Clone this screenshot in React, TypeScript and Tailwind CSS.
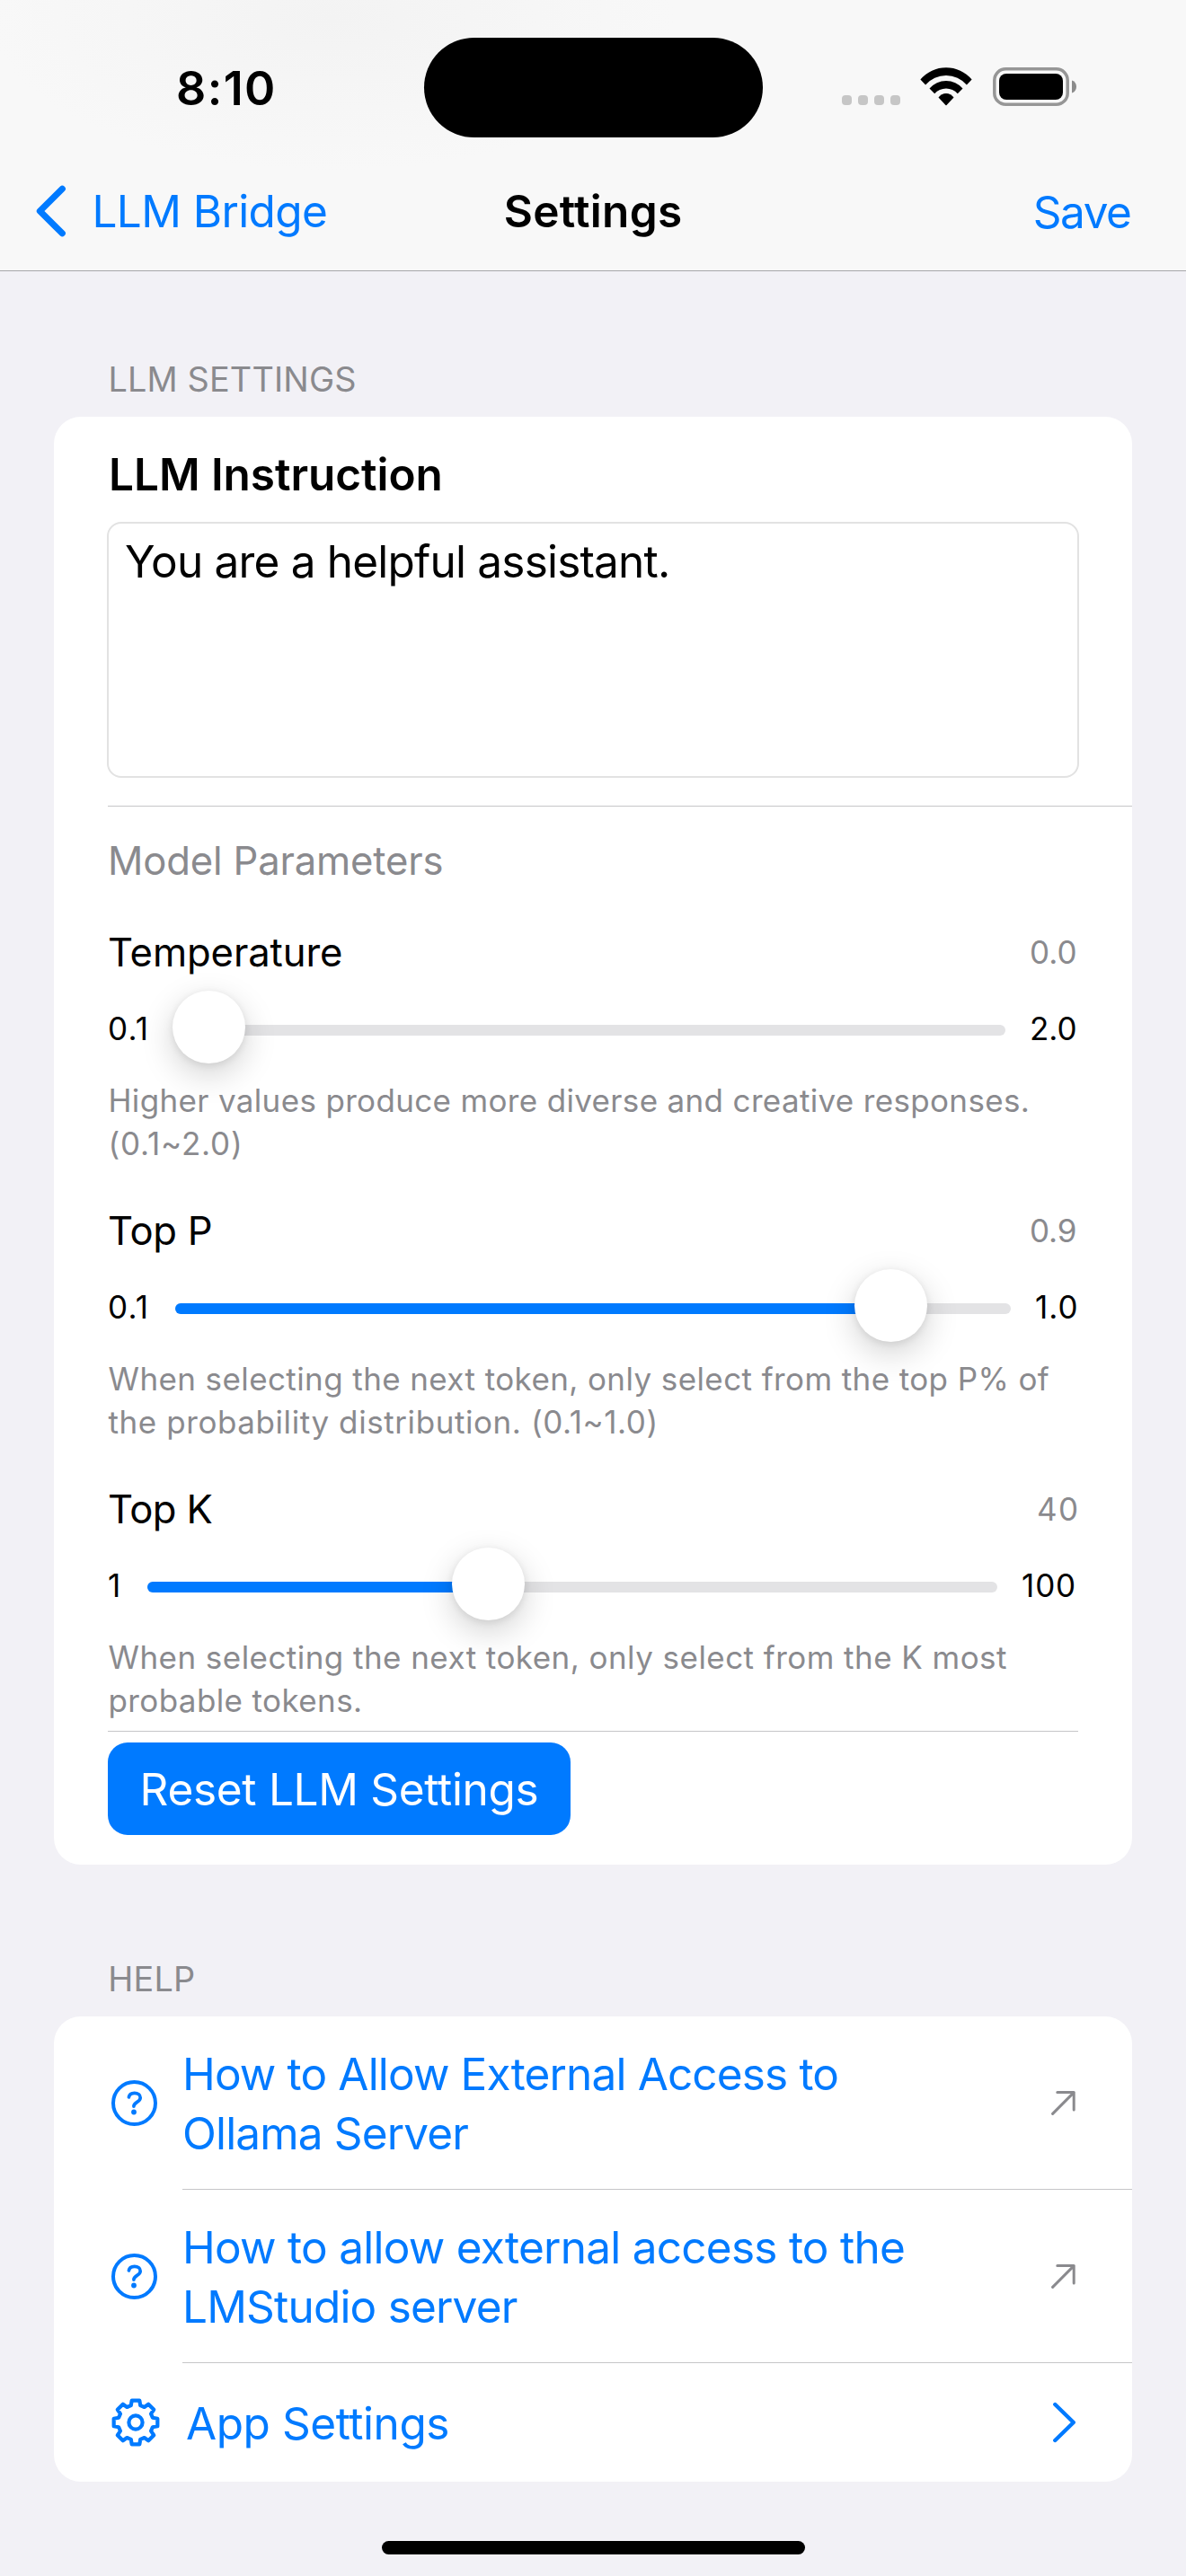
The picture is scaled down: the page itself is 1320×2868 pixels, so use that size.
type Line = { text: string; tracking: string };

type SliderSpec = {
  name: string;
  nameTracking: string;
  value: string;
  valueClass: string;
  min: string;
  minClass: string;
  max: string;
  maxClass: string;
  knob: number;
  lines: Line[];
};

const sliders: SliderSpec[] = [
  {
    name: "Temperature",
    nameTracking: "tracking-[-0.11px]",
    value: "0.0",
    valueClass: "w-[54px]",
    min: "0.1",
    minClass: "w-[75px] tracking-[1.2px]",
    max: "2.0",
    maxClass: "w-[81px]",
    knob: -3,
    lines: [
      { text: "Higher values produce more diverse and creative responses.", tracking: "tracking-[0.34px]" },
      { text: "(0.1~2.0)", tracking: "tracking-[0.83px]" },
    ],
  },
  {
    name: "Top P",
    nameTracking: "tracking-[-0.28px]",
    value: "0.9",
    valueClass: "w-[54px] tracking-[-0.1px]",
    min: "0.1",
    minClass: "w-[75px] tracking-[1.2px]",
    max: "1.0",
    maxClass: "w-[75px] tracking-[1px]",
    knob: 756,
    lines: [
      { text: "When selecting the next token, only select from the top P% of", tracking: "tracking-[0.4px]" },
      { text: "the probability distribution. (0.1~1.0)", tracking: "tracking-[0.58px]" },
    ],
  },
  {
    name: "Top K",
    nameTracking: "tracking-[-0.6px]",
    value: "40",
    valueClass: "w-[46px] tracking-[1.3px]",
    min: "1",
    minClass: "w-[44px]",
    max: "100",
    maxClass: "w-[90px] tracking-[0.9px]",
    knob: 339,
    lines: [
      { text: "When selecting the next token, only select from the K most", tracking: "tracking-[0.45px]" },
      { text: "probable tokens.", tracking: "tracking-[0.39px]" },
    ],
  },
];

const helpLinks: Line[][] = [
  [
    { text: "How to Allow External Access to", tracking: "tracking-[-0.85px]" },
    { text: "Ollama Server", tracking: "tracking-[-0.85px]" },
  ],
  [
    { text: "How to allow external access to the", tracking: "tracking-[-0.74px]" },
    { text: "LMStudio server", tracking: "tracking-[-0.8px]" },
  ],
];

function CellularDots() {
  return (
    <div className="mt-[106px] ml-[88.5px] flex gap-[7px]">
      {[0, 1, 2, 3].map((i) => (
        <div key={i} className="size-[11px] rounded-[4px] bg-[#c6c6c6]" />
      ))}
    </div>
  );
}

function WifiIcon() {
  return (
    <svg className="mt-[74.5px] ml-[22.3px] h-[43px] w-[58px] shrink-0" viewBox="-29 -42.5 58 43">
      <path d="M-28.6 -28.9A37.4 37.4 0 0 1 28.6 -28.9L22.9 -23A30.4 30.4 0 0 0 -22.9 -23Z" />
      <path d="M-18.5 -19A24.3 24.3 0 0 1 18.5 -19L12.8 -13.3A17 17 0 0 0 -12.8 -13.3Z" />
      <path d="M-8.5 -9A10.2 10.2 0 0 1 8.5 -9L0.6 -0.4Q0 0 -0.6 -0.4Z" />
    </svg>
  );
}

function BatteryIcon() {
  return (
    <svg className="mt-[75px] ml-[22.7px] h-[43px] w-[94px] shrink-0" viewBox="0 0 94 43">
      <rect x="1.8" y="1.8" width="81.4" height="39.4" rx="12.5" fill="none" stroke="#969696" strokeWidth="3.5" />
      <rect x="7" y="7" width="71" height="29" rx="8" />
      <path d="M88 14.6C91.4 15.6 93 18.4 93 21.6C93 24.8 91.4 27.6 88 28.6Z" fill="#8c8c8c" />
    </svg>
  );
}

function QuestionIcon() {
  return (
    <svg className="h-[51px] w-[51px] shrink-0" viewBox="-25.5 -25.5 51 51" fill="none" stroke="#007aff">
      <circle r="23.5" strokeWidth="4" />
      <path
        d="M-6.1 -6.6C-5.6 -9.6 -3.2 -11.1 0.2 -11.1C4 -11.1 6.7 -9.2 6.7 -6.1C6.7 -0.9 -0.6 -1.4 -0.6 3.6"
        strokeWidth="3.7"
        strokeLinecap="round"
      />
      <circle cx="-0.5" cy="10" r="2.9" fill="#007aff" stroke="none" />
    </svg>
  );
}

const gearOutline = Array.from({ length: 8 }, (_, tooth) =>
  [
    [-15.5, 19.6],
    [-10, 24.7],
    [10, 24.7],
    [15.5, 19.6],
  ].map(([offset, radius]) => {
    const angle = ((tooth * 45 + offset - 90) * Math.PI) / 180;
    return `${(radius * Math.cos(angle)).toFixed(2)},${(radius * Math.sin(angle)).toFixed(2)}`;
  }),
)
  .flat()
  .join(" ");

function GearIcon() {
  return (
    <svg className="h-[54px] w-[54px] shrink-0" viewBox="-27 -27 54 54" fill="none" stroke="#007aff" strokeWidth="4.2">
      <polygon points={gearOutline} strokeLinejoin="round" />
      <circle r="7.6" />
    </svg>
  );
}

function ArrowUpRight() {
  return (
    <svg
      className="h-[27px] w-[27px] shrink-0"
      viewBox="0 0 27 27"
      fill="none"
      stroke="#8a8a8e"
      strokeWidth="3"
      strokeLinecap="round"
      strokeLinejoin="round"
    >
      <path d="M6.8 1.6H25.2V21M25.2 1.6L1.6 25.4" />
    </svg>
  );
}

function SliderGroup({ spec }: { spec: SliderSpec }) {
  const filled = spec.knob > 0 ? spec.knob + 40 : 0;
  return (
    <div className="h-[267px]">
      <div className="flex h-[61px] items-center justify-between">
        <div className={`text-[43.6px] leading-[61px] ${spec.nameTracking}`}>{spec.name}</div>
        <div className={`pb-[2px] text-[35px] leading-[48px] whitespace-nowrap text-[#8a8a8e] ${spec.valueClass}`}>
          {spec.value}
        </div>
      </div>
      <div className="mt-3 flex h-[81px] items-center text-[35px] leading-[48px]">
        <div className={`shrink-0 pt-[3px] ${spec.minClass}`}>{spec.min}</div>
        <div className="relative mt-[7px] h-3 flex-1 rounded-full bg-[#e3e3e5]">
          <div className="h-3 rounded-full bg-[#007aff]" style={{ width: filled }} />
          <div
            className="absolute top-[-38px] size-[81px] rounded-full bg-white shadow-[0_12px_36px_rgba(0,0,0,0.18),0_2px_8px_rgba(0,0,0,0.09)]"
            style={{ left: spec.knob }}
          />
        </div>
        <div className={`shrink-0 pt-[3px] pl-[27px] whitespace-nowrap ${spec.maxClass}`}>{spec.max}</div>
      </div>
      <p className="relative mt-[17px] pl-[0.5px] text-[35px] leading-[48px] text-[#8a8a8e]">
        {spec.lines.map((line) => (
          <span key={line.text} className={`block whitespace-nowrap ${line.tracking}`}>
            {line.text}
          </span>
        ))}
      </p>
    </div>
  );
}

export default function App() {
  return (
    <div className="flex h-[2868px] w-[1320px] flex-col overflow-hidden bg-[#f2f1f6] font-[Inter,sans-serif] text-black">
      <header className="h-[302px] shrink-0 border-b border-[#a7a7aa] bg-[#f8f8f8] bg-[radial-gradient(ellipse_380px_170px_at_370px_20px,#f3f3f3,#f8f8f8)]">
        <div className="flex h-[169px] items-start">
          <div className="mt-[68px] w-[471.5px] pl-[196px] text-[52px] leading-[61px] font-semibold tracking-[1.38px]">
            8:10
          </div>
          <div className="mt-[41.5px] h-[111px] w-[377px] rounded-[56px] bg-black" />
          <CellularDots />
          <WifiIcon />
          <BatteryIcon />
        </div>
        <nav className="grid h-[132px] grid-cols-[560.7px_589px_1fr] items-center text-[49.5px] leading-[60px]">
          <div className="flex items-center pl-10 text-[#007aff]">
            <svg
              className="h-[58px] w-[34px]"
              viewBox="0 0 34 58"
              fill="none"
              stroke="#007aff"
              strokeWidth="7.2"
              strokeLinecap="round"
              strokeLinejoin="round"
            >
              <path d="M29.3 4.2L4.4 29L29.3 53.8" />
            </svg>
            <span className="pl-[28.5px] tracking-[-0.62px]">LLM Bridge</span>
          </div>
          <h1 className="font-semibold tracking-[0.32px]">Settings</h1>
          <div className="pt-[2px] tracking-[-1.43px] text-[#007aff]">Save</div>
        </nav>
      </header>

      <main className="flex flex-col px-[60px]">
        <h2 className="mt-[90px] mb-3 pl-[60.4px] text-[37.8px] leading-[60px] tracking-[0.16px] text-[#8a8a8e]">LLM SETTINGS</h2>
        <section className="h-[1612px] rounded-[30px] bg-white">
          <div className="px-[60px] pt-[34px]">
            <h3 className="pl-px text-[49.5px] leading-[60px] font-semibold tracking-[-0.04px]">LLM Instruction</h3>
            <div className="-mx-px mt-[23px] h-[285px] rounded-[16px] border-2 border-[#e2e2e2] pt-3 pl-[18px] text-[49.5px] leading-[60px] tracking-[-0.8px]">
              You are a helpful assistant.
            </div>
          </div>
          <div className="mt-[31px] ml-[60px] h-px bg-[#c6c6c8]" />
          <div className="px-[60px] pt-[30px]">
            <div className="text-[43.6px] leading-[61px] tracking-[-0.16px] text-[#8a8a8e]">Model Parameters</div>
            <div className="mt-[41px] flex flex-col gap-[43px]">
              {sliders.map((spec) => (
                <SliderGroup key={spec.name} spec={spec} />
              ))}
            </div>
            <div className="mt-[10px] h-px bg-[#c6c6c8]" />
            <button className="mt-3 flex h-[103px] w-[515px] items-center rounded-[22px] bg-[#007aff] pl-[35.6px] text-[49.5px] leading-[60px] tracking-[-0.3px] text-white">
              Reset LLM Settings
            </button>
          </div>
        </section>

        <h2 className="mt-[97px] mb-3 pl-[60.3px] text-[37.8px] leading-[60px] tracking-[0.17px] text-[#8a8a8e]">HELP</h2>
        <section className="h-[518px] rounded-[30px] bg-white text-[49.5px] leading-[66px] text-[#007aff]">
          {helpLinks.map((lines) => (
            <div key={lines[0].text}>
              <div className="flex h-[192px] items-center pr-[63px] pl-16">
                <QuestionIcon />
                <div className="flex-1 pt-[2px] pl-7">
                  {lines.map((line) => (
                    <div key={line.text} className={line.tracking}>
                      {line.text}
                    </div>
                  ))}
                </div>
                <ArrowUpRight />
              </div>
              <div className="ml-[143px] h-px bg-[#c6c6c8]" />
            </div>
          ))}
          <div className="flex h-[132px] items-center pr-[62px] pl-16">
            <GearIcon />
            <div className="flex-1 pt-px pl-[29px] tracking-[-0.43px]">App Settings</div>
            <svg
              className="h-[46px] w-[27px] shrink-0"
              viewBox="0 0 27 46"
              fill="none"
              stroke="#007aff"
              strokeWidth="4.4"
              strokeLinecap="round"
              strokeLinejoin="round"
            >
              <path d="M3.3 3L23.8 23L3.3 43" />
            </svg>
          </div>
        </section>
      </main>

      <div className="mx-auto mt-[66px] h-[15px] w-[471px] shrink-0 rounded-full bg-black" />
    </div>
  );
}
